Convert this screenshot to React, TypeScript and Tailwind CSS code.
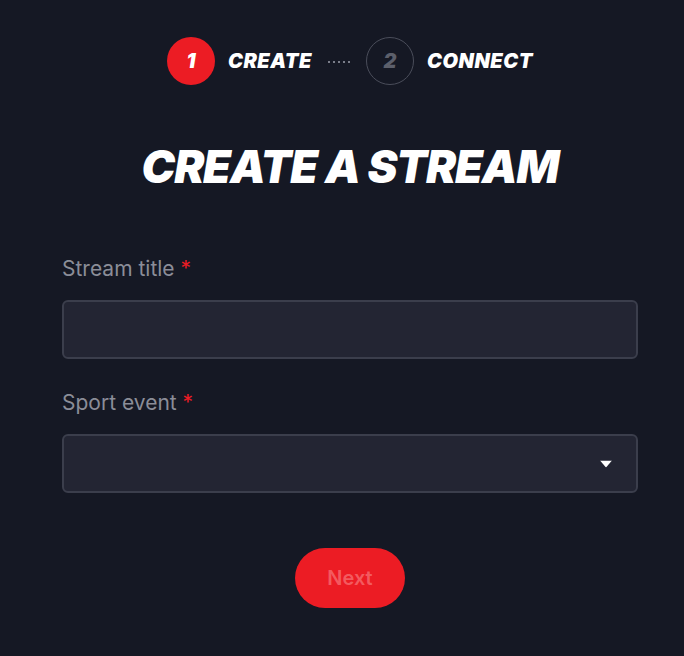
const StepCircle = ({ n, active }: { n: number; active?: boolean }) => (
    <div
        className={
            active
                ? 'flex h-12 w-12 items-center justify-center rounded-full bg-[#ec1c24] text-[20px] font-black italic text-white'
                : 'flex h-12 w-12 items-center justify-center rounded-full border border-[#4a4d5a] text-[20px] font-black italic text-[#5c5f6b]'
        }
    >
        {n}
    </div>
);

const Label = ({ text }: { text: string }) => (
    <p className="text-[21px] text-[#8b8d98]">
        {text} <span className="text-[#ec1c24]">*</span>
    </p>
);

export default function App() {
    return (
        <div
            className="flex min-h-[656px] w-full flex-col items-center bg-[#151824] pl-[16px] pt-[37px]"
            style={{ fontFamily: 'Inter, "Noto Sans", sans-serif' }}
        >
            <div className="flex items-center">
                <StepCircle n={1} active />
                <span className="ml-[13px] text-[20px] font-black italic tracking-wide text-white">CREATE</span>
                <span className="mx-[16px] mt-[2px] flex gap-[3px]">
                    {[0, 1, 2, 3, 4].map((dot) => (
                        <span key={dot} className="h-[2px] w-[2px] bg-[#7a7d89]" />
                    ))}
                </span>
                <StepCircle n={2} />
                <span className="ml-[13px] text-[20px] font-black italic tracking-wide text-white">CONNECT</span>
            </div>

            <h1 className="mt-[59px] text-[45px] font-black italic leading-none tracking-tight text-white">
                CREATE A STREAM
            </h1>

            <form className="mt-[64px] flex w-[576px] flex-col">
                <Label text="Stream title" />
                <input
                    type="text"
                    className="mt-[15px] h-[59px] w-full rounded-md border-2 border-[#3b3e4c] bg-[#232533] px-4 text-white outline-none"
                />

                <div className="mt-[28px]">
                    <Label text="Sport event" />
                </div>
                <div className="relative mt-[16px] h-[59px] w-full rounded-md border-2 border-[#3b3e4c] bg-[#232533]">
                    <svg
                        className="absolute right-[24px] top-1/2 -translate-y-1/2"
                        width="12"
                        height="7"
                        viewBox="0 0 12 7"
                    >
                        <path d="M0 0h12L6 7z" fill="white" />
                    </svg>
                </div>

                <button
                    type="button"
                    className="mx-auto mt-[55px] h-[60px] w-[110px] rounded-full bg-[#ec1c24] text-[20px] font-semibold text-[#f35a5f]"
                >
                    Next
                </button>
            </form>
        </div>
    );
}
